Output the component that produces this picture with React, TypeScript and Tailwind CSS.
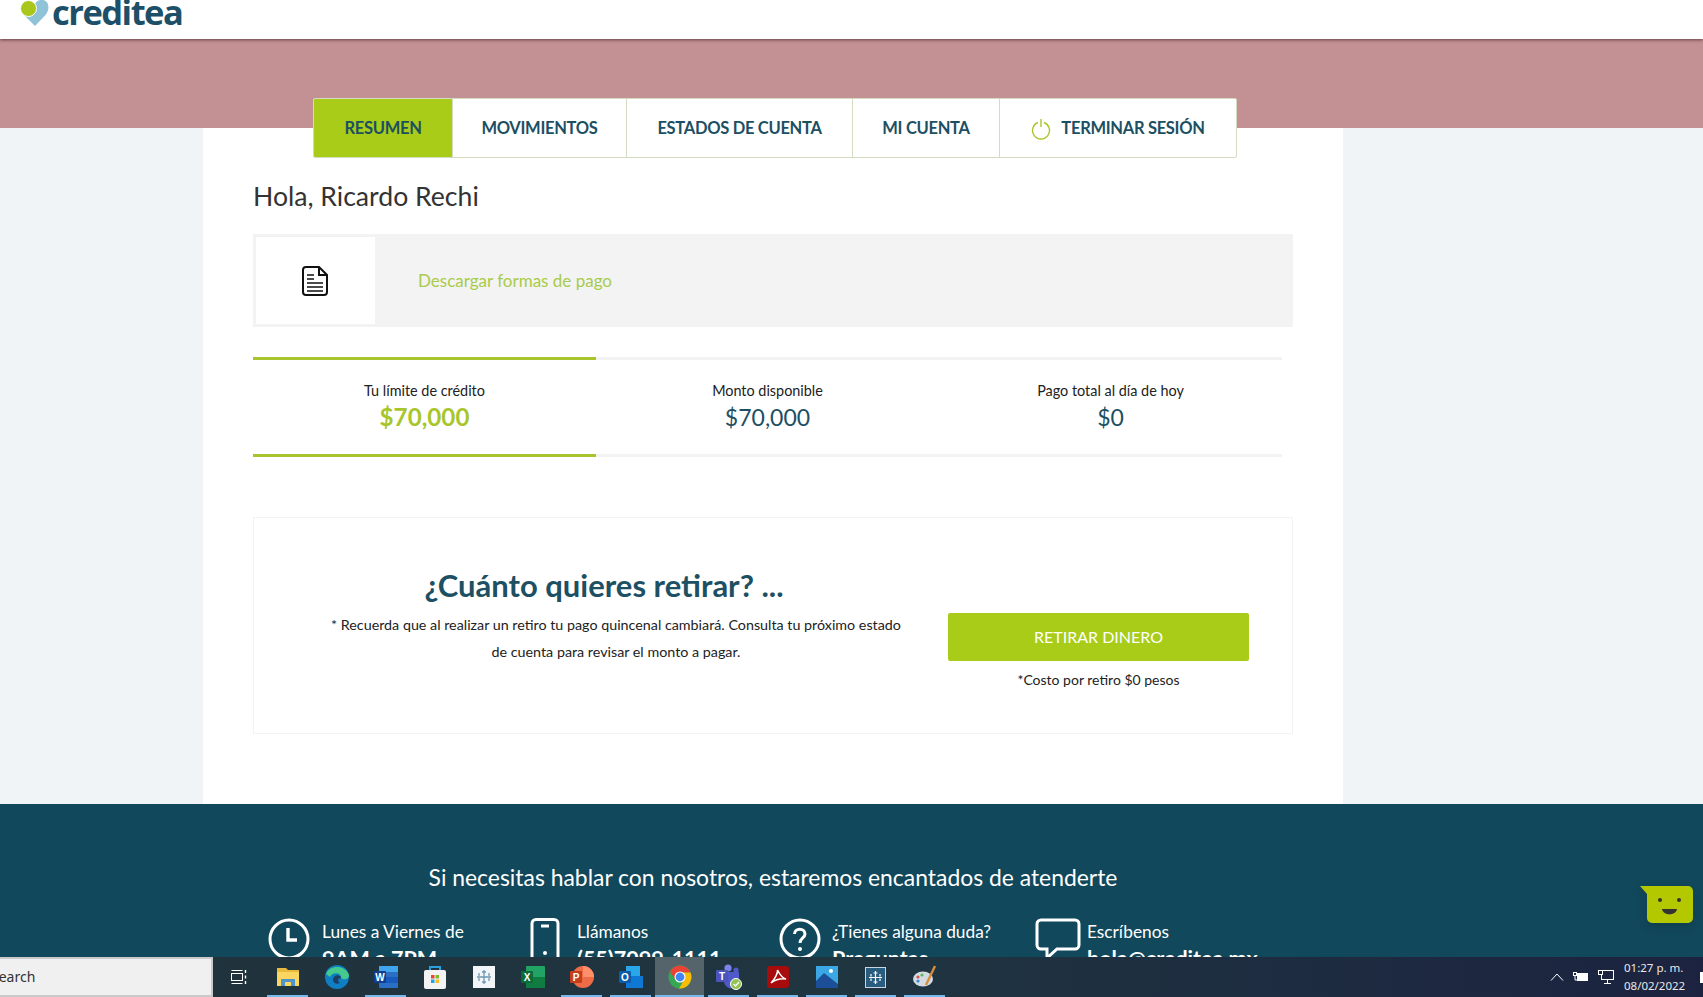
import React from "react";

const font = { fontFamily: '"Lato", "Noto Sans", sans-serif' };

const tabs = [
  { label: "RESUMEN", width: "w-[139px]", active: true },
  { label: "MOVIMIENTOS", width: "w-[174px]" },
  { label: "ESTADOS DE CUENTA", width: "w-[226px]" },
  { label: "MI CUENTA", width: "w-[147px]" },
];

const stats = [
  { label: "Tu límite de crédito", value: "$70,000", active: true },
  { label: "Monto disponible", value: "$70,000" },
  { label: "Pago total al día de hoy", value: "$0" },
];

function Logo() {
  return (
    <div className="flex h-full items-start pl-[20px]">
      <svg width="30" height="27" viewBox="0 0 30 27" className="shrink-0">
        <path d="M2 13 L15 26 L25.5 15 C30 10 29.5 1 23 0 C19 -0.5 16.5 1 15 4 Z" fill="#8fc4d8" />
        <circle cx="8.5" cy="8.5" r="8" fill="#a8c61c" stroke="#ffffff" strokeWidth="1" />
      </svg>
      <span
        className="ml-[2px] mt-[-11px] text-[34.5px] leading-[46px] font-bold tracking-[-1.5px] text-[#1d5068]"
        style={{ fontFamily: '"Open Sans", sans-serif' }}
      >
        creditea
      </span>
    </div>
  );
}

function PowerIcon() {
  return (
    <svg width="20" height="22" viewBox="0 0 20 22" fill="none" stroke="#a8c62b" strokeWidth="1.4" className="mr-[10px] mt-[2px]">
      <path d="M7 4.5 A8.5 8.5 0 1 0 13 4.5" />
      <path d="M10 1 V9" />
    </svg>
  );
}

function DocIcon() {
  return (
    <svg width="26" height="30" viewBox="0 0 26 30" fill="none" stroke="#111111" strokeWidth="2" className="mr-[2px]">
      <path d="M4 1 H17 L25 9 V26 A3 3 0 0 1 22 29 H4 A3 3 0 0 1 1 26 V4 A3 3 0 0 1 4 1 Z" />
      <path d="M17 1 V9 H25" />
      <path d="M5 9 H12 M5 13 H12 M5 17 H21 M5 21 H21 M5 25 H21" strokeWidth="1.6" />
    </svg>
  );
}

function ContactIcon({ kind }: { kind: string }) {
  if (kind === "clock") {
    return (
      <svg width="42" height="42" viewBox="0 0 42 42" fill="none" stroke="#fff" strokeWidth="3">
        <circle cx="21" cy="21" r="19" />
        <path d="M20 10 V22 H29" strokeWidth="3.4" />
      </svg>
    );
  }
  if (kind === "phone") {
    return (
      <svg width="30" height="50" viewBox="0 0 30 50" fill="none" stroke="#fff" strokeWidth="3" className="ml-[7px]">
        <rect x="2" y="1.5" width="26" height="47" rx="4" />
        <path d="M11 8 H19" />
        <circle cx="15" cy="35" r="2" fill="#fff" stroke="none" />
      </svg>
    );
  }
  if (kind === "help") {
    return (
      <svg width="42" height="42" viewBox="0 0 42 42" fill="none" stroke="#fff" strokeWidth="3" className="ml-[1px]">
        <circle cx="21" cy="21" r="19" />
        <path d="M15.5 16 C15.5 9.5 26 9.5 26 16 C26 20 21 20 21 25" />
        <circle cx="21" cy="31" r="2" fill="#fff" stroke="none" />
      </svg>
    );
  }
  return (
    <svg width="46" height="42" viewBox="0 0 46 42" fill="none" stroke="#fff" strokeWidth="3" className="ml-[2px]">
      <path d="M6 2 H40 A4 4 0 0 1 44 6 V27 A4 4 0 0 1 40 31 H22 L12 40 V31 H6 A4 4 0 0 1 2 27 V6 A4 4 0 0 1 6 2 Z" />
    </svg>
  );
}

const contacts = [
  { icon: "clock", line1: "Lunes a Viernes de", line2: "9AM a 7PM" },
  { icon: "phone", line1: "Llámanos", line2: "(55)7099-1111" },
  { icon: "help", line1: "¿Tienes alguna duda?", line2: "Preguntas" },
  { icon: "mail", line1: "Escríbenos", line2: "hola@creditea.mx" },
];

// taskbar glyphs, drawn on a 24 box
function TaskGlyph({ name }: { name: string }) {
  switch (name) {
    case "view":
      return (
        <svg width="16" height="18" viewBox="0 0 16 18" fill="none" stroke="#fff" strokeWidth="1">
          <path d="M0.5 2.5 H11.5 M0.5 15.5 H11.5" />
          <rect x="0.5" y="5.5" width="11" height="7" />
          <path d="M14.5 2 V5 M14.5 7.5 V10.5 M14.5 13 V16" strokeWidth="1.4" />
        </svg>
      );
    case "folder":
      return (
        <svg width="22" height="20" viewBox="0 0 22 20">
          <path d="M0 1 H9 L11 3 H22 V19 H0 Z" fill="#e8b93a" />
          <path d="M0 5 H22 V19 H0 Z" fill="#fad55f" />
          <path d="M4 19 V12 H18 V19 H14 V15 H8 V19 Z" fill="#4f94c8" />
        </svg>
      );
    case "edge":
      return (
        <svg width="24" height="24" viewBox="0 0 24 24">
          <circle cx="12" cy="12" r="12" fill="#0f7fc4" />
          <path d="M1 9 C4 0 20 -1 24 10 C24 15 18 15 16 13 C17 8 8 6 5 12 Z" fill="#45c98c" />
          <path d="M8 15 C8 9 16 9 16 13 C13 13 12 16 15 18 C12 20 8 18 8 15 Z" fill="#1c3f66" />
        </svg>
      );
    case "word":
      return (
        <svg width="24" height="22" viewBox="0 0 24 22">
          <rect x="5" y="0" width="19" height="22" rx="1" fill="#2b6fc5" />
          <rect x="5" y="0" width="19" height="6" fill="#41a5ee" />
          <rect x="5" y="11" width="19" height="6" fill="#185abd" />
          <rect x="0" y="5" width="12" height="12" rx="1" fill="#103f91" />
          <text x="6" y="14.5" textAnchor="middle" fontSize="10" fontWeight="700" fill="#fff" fontFamily="Liberation Sans">W</text>
        </svg>
      );
    case "store":
      return (
        <svg width="22" height="24" viewBox="0 0 22 24">
          <path d="M6 5 V2 H16 V5" fill="none" stroke="#2aa0e0" strokeWidth="2" />
          <rect x="0" y="5" width="22" height="19" rx="2" fill="#f3f3f3" />
          <rect x="7" y="10" width="3.5" height="3.5" fill="#e8492f" />
          <rect x="11.5" y="10" width="3.5" height="3.5" fill="#7fba2a" />
          <rect x="7" y="14.5" width="3.5" height="3.5" fill="#1ea2e6" />
          <rect x="11.5" y="14.5" width="3.5" height="3.5" fill="#fbb922" />
        </svg>
      );
    case "tableau":
      return (
        <svg width="22" height="22" viewBox="0 0 22 22">
          <rect width="22" height="22" fill="#f2f5f7" />
          <path d="M11 4 V18 M4 11 H18 M6 7 V10 M6 12 V15 M16 7 V10 M16 12 V15 M9 6 H13 M9 16 H13" stroke="#6f97b3" strokeWidth="1.3" />
        </svg>
      );
    case "excel":
      return (
        <svg width="24" height="22" viewBox="0 0 24 22">
          <rect x="5" y="0" width="19" height="22" rx="1" fill="#21a366" />
          <rect x="5" y="11" width="19" height="11" fill="#107c41" />
          <rect x="0" y="5" width="12" height="12" rx="1" fill="#0c6b38" />
          <text x="6" y="14.5" textAnchor="middle" fontSize="10" fontWeight="700" fill="#fff" fontFamily="Liberation Sans">X</text>
        </svg>
      );
    case "ppt":
      return (
        <svg width="24" height="24" viewBox="0 0 24 24">
          <circle cx="13" cy="12" r="11" fill="#ed6c47" />
          <path d="M13 1 A11 11 0 0 1 24 12 H13 Z" fill="#ff8f6b" />
          <rect x="0" y="6" width="12" height="12" rx="1" fill="#c43e1c" />
          <text x="6" y="15.5" textAnchor="middle" fontSize="10" fontWeight="700" fill="#fff" fontFamily="Liberation Sans">P</text>
        </svg>
      );
    case "outlook":
      return (
        <svg width="24" height="22" viewBox="0 0 24 22">
          <rect x="7" y="0" width="14" height="12" fill="#28a8ea" />
          <path d="M7 10 H24 V22 H7 Z" fill="#0f78d4" />
          <rect x="0" y="5" width="12" height="12" rx="1" fill="#0a5ca8" />
          <text x="6" y="14.5" textAnchor="middle" fontSize="10" fontWeight="700" fill="#fff" fontFamily="Liberation Sans">O</text>
        </svg>
      );
    case "chrome":
      return (
        <svg width="24" height="24" viewBox="0 0 24 24">
          <circle cx="12" cy="12" r="11.5" fill="#34a853" />
          <path d="M2 6.5 A11.5 11.5 0 0 1 22.5 7.5 H12 L7 14 Z" fill="#ea4335" />
          <path d="M22.5 7.5 A11.5 11.5 0 0 1 11 23.5 L16 15 L12 7.5 Z" fill="#fbbc05" />
          <circle cx="12" cy="12" r="5.5" fill="#fff" />
          <circle cx="12" cy="12" r="4.4" fill="#4285f4" />
        </svg>
      );
    case "teams":
      return (
        <svg width="26" height="26" viewBox="0 0 26 26">
          <circle cx="12" cy="4" r="3.6" fill="#7b83eb" />
          <circle cx="20" cy="6" r="2.6" fill="#5059c9" />
          <path d="M8 8 H23 V17 A6 6 0 0 1 8 17 Z" fill="#5059c9" />
          <rect x="0" y="6" width="12" height="12" rx="1" fill="#4b53bc" />
          <text x="6" y="15.5" textAnchor="middle" fontSize="10" fontWeight="700" fill="#fff" fontFamily="Liberation Sans">T</text>
          <circle cx="20" cy="20" r="5.5" fill="#92c353" stroke="#fff" strokeWidth="1" />
          <path d="M17.5 20 L19.5 22 L23 18" fill="none" stroke="#fff" strokeWidth="1.3" />
        </svg>
      );
    case "acrobat":
      return (
        <svg width="22" height="22" viewBox="0 0 22 22">
          <rect width="22" height="22" rx="3" fill="#a80b0b" />
          <path d="M4 17 C8 13 11 7 10.5 4 C13 9 15 12 19 13 C14 12.5 8 14 4 17 Z" fill="none" stroke="#fff" strokeWidth="1.5" />
        </svg>
      );
    case "photos":
      return (
        <svg width="22" height="22" viewBox="0 0 22 22">
          <rect width="22" height="22" fill="#3ba7e5" />
          <circle cx="15" cy="5" r="2" fill="#fff" />
          <path d="M0 15 L8 7 L22 18 V22 H0 Z" fill="#1d4f99" />
        </svg>
      );
    case "tableau2":
      return (
        <svg width="21" height="21" viewBox="0 0 21 21">
          <rect x="0.5" y="0.5" width="20" height="20" fill="#285d80" stroke="#c9d6df" />
          <path d="M10.5 4 V17 M4 10.5 H17 M6 7 V9.5 M6 11.5 V14 M15 7 V9.5 M15 11.5 V14 M8.5 6 H12.5 M8.5 15 H12.5" stroke="#fff" strokeWidth="1.2" />
        </svg>
      );
    case "paint":
      return (
        <svg width="24" height="24" viewBox="0 0 24 24">
          <ellipse cx="10" cy="14" rx="10" ry="7.5" fill="#d3dbe2" />
          <circle cx="5" cy="12" r="1.6" fill="#d9534f" />
          <circle cx="9" cy="10" r="1.6" fill="#5bb75b" />
          <circle cx="5" cy="16" r="1.6" fill="#3a87d6" />
          <path d="M22 1 L13 20" stroke="#d98b3a" strokeWidth="2.4" />
        </svg>
      );
  }
  return null;
}

const taskItems = [
  { name: "view" },
  { name: "folder", open: true },
  { name: "edge" },
  { name: "word", open: true },
  { name: "store" },
  { name: "tableau" },
  { name: "excel" },
  { name: "ppt", open: true },
  { name: "outlook", open: true },
  { name: "chrome", open: true, active: true },
  { name: "teams", open: true },
  { name: "acrobat", open: true },
  { name: "photos", open: true },
  { name: "tableau2", open: true },
  { name: "paint", open: true },
];

function Taskbar() {
  return (
    <div className="flex h-[40px] shrink-0 bg-gradient-to-r from-[#20323c] via-[#1f3540] to-[#1c2340]" style={{ fontFamily: '"Noto Sans", sans-serif' }}>
      <div className="h-full w-[213px] shrink-0 overflow-hidden border-y-2 border-r-2 border-[#c9c9c9] bg-[#f0f0f0]">
        <div className="ml-[-9px] text-[14px] leading-[35px] text-[#333]">Search</div>
      </div>
      <div className="ml-[1px] flex">
        {taskItems.map((item) => (
          <div
            key={item.name}
            className={`relative flex h-full w-[49px] items-center justify-center ${item.active ? "bg-[#55646b]" : ""}`}
          >
            <TaskGlyph name={item.name} />
            {item.open && (
              <div className={`absolute bottom-0 h-[2px] bg-[#76b9ed] ${item.active ? "inset-x-0" : "inset-x-[4px]"}`} />
            )}
          </div>
        ))}
      </div>
      <div className="ml-auto flex items-center text-white">
        <svg width="14" height="8" viewBox="0 0 14 8" fill="none" stroke="#fff" strokeWidth="1">
          <path d="M1 7.5 L7 1 L13 7.5" />
        </svg>
        <svg width="16" height="12" viewBox="0 0 16 12" fill="none" stroke="#fff" className="ml-[9px]">
          <rect x="4.5" y="2.5" width="10" height="7" fill="#fff" />
          <rect x="0.5" y="1.5" width="3" height="3" />
          <path d="M2 5 V9 H4" />
        </svg>
        <svg width="16" height="14" viewBox="0 0 16 14" fill="none" stroke="#fff" className="ml-[9px]">
          <rect x="3.5" y="0.5" width="12" height="9" />
          <rect x="0.5" y="0.5" width="4" height="4" fill="#1c2340" />
          <path d="M9.5 9.5 V13 M6 13.5 H13" />
        </svg>
        <div className="ml-[10px] w-[76px] text-[11.5px] leading-[18px] text-[#e8e8e8]">
          <div>01:27 p. m.</div>
          <div>08/02/2022</div>
        </div>
        <div className="h-[11px] w-[3px] bg-white" />
      </div>
    </div>
  );
}

function ChatBubble() {
  return (
    <div className="absolute left-[1640px] top-[886px] drop-shadow-lg">
      <svg width="54" height="38" viewBox="0 0 54 38">
        <path d="M0 0 H48 A5 5 0 0 1 53 5 V32 A5 5 0 0 1 48 37 H12 A5 5 0 0 1 7 32 V8 Z" fill="#b4c800" />
        <circle cx="20" cy="14" r="2" fill="#333" />
        <circle cx="39" cy="14" r="2" fill="#333" />
        <path d="M22 23 H37 C36 30 23 30 22 23 Z" fill="#333" />
      </svg>
    </div>
  );
}

export default function App() {
  return (
    <div className="relative flex h-[997px] flex-col overflow-hidden bg-[#f0f4f7]" style={font}>
      <div className="flex min-h-0 flex-1 flex-col overflow-hidden">
        <header className="relative z-10 h-[39px] shrink-0 overflow-hidden bg-white shadow-[0_1px_3px_rgba(60,30,30,0.7)]">
          <Logo />
        </header>
        <div className="h-[89px] shrink-0 bg-[#c39093]" />

        <main className="ml-[203px] h-[676px] w-[1140px] shrink-0 bg-white pl-[50px]">
          <nav className="relative ml-[60px] mt-[-30px] flex h-[60px] w-[924px] overflow-hidden rounded-[2px] border border-[#d3dcc0] bg-white text-[16.5px] font-bold tracking-[-0.3px] text-[#1d4f63]">
            {tabs.map((t) => (
              <div
                key={t.label}
                className={`flex items-center justify-center border-r border-[#d3dcc0] ${t.width} ${t.active ? "bg-[#a8cc18]" : ""}`}
              >
                {t.label}
              </div>
            ))}
            <div className="flex flex-1 items-center justify-center">
              <PowerIcon />
              TERMINAR SESIÓN
            </div>
          </nav>

          <h1 className="mt-[22px] text-[26.6px] leading-[32px] text-[#333]">Hola, Ricardo Rechi</h1>

          <div className="mt-[22px] flex h-[93px] w-[1040px] items-center bg-[#f3f3f3] pl-[3px]">
            <div className="flex h-[87px] w-[119px] items-center justify-center bg-white">
              <DocIcon />
            </div>
            <span className="ml-[43px] text-[17px] text-[#a9cb4a]">Descargar formas de pago</span>
          </div>

          <div className="mt-[30px] grid w-[1029px] grid-cols-3 border-y-[3px] border-[#f3f3f3]">
            {stats.map((s) => (
              <div key={s.label} className="relative flex h-[94px] flex-col items-center pt-[21px]">
                {s.active && <div className="absolute inset-x-0 top-[-3px] h-[3px] bg-[#a8c62b]" />}
                {s.active && <div className="absolute inset-x-0 bottom-[-3px] h-[3px] bg-[#a8c62b]" />}
                <div className="text-[14.4px] leading-[20px] text-[#222]">{s.label}</div>
                <div className={`mt-[-1px] leading-[34px] ${s.active ? "text-[24.2px] font-bold text-[#a8c62b]" : "text-[23px] text-[#1d4f63]"}`}>{s.value}</div>
              </div>
            ))}
          </div>

          <div className="mt-[60px] flex h-[217px] w-[1040px] border border-[#f3f3f3]">
            <div className="flex w-[700px] flex-col items-center pt-[44px]">
              <h2 className="text-[31px] font-bold leading-[46px] text-[#1d5063]">¿Cuánto quieres retirar? ...</h2>
              <p className="ml-[24px] mt-[3px] w-[575px] text-center text-[14.3px] leading-[27px] text-[#222]">
                * Recuerda que al realizar un retiro tu pago quincenal cambiará. Consulta tu próximo estado de cuenta para revisar el monto a pagar.
              </p>
            </div>
            <div className="ml-[-6px] flex w-[301px] flex-col items-center pt-[95px]">
              <button className="h-[48px] w-full rounded-[2px] bg-[#a8cc18] text-[16px] text-white">RETIRAR DINERO</button>
              <div className="mt-[9px] text-[14px] leading-[20px] text-[#222]">*Costo por retiro $0 pesos</div>
            </div>
          </div>
        </main>

        <footer className="flex-1 bg-[#11485c] pl-[268px] text-white">
          <div className="mt-[58px] w-[1010px] text-center text-[22.9px] leading-[30px]">
            Si necesitas hablar con nosotros, estaremos encantados de atenderte
          </div>
          <div className="mt-[26px] flex">
            {contacts.map((c) => (
              <div key={c.icon} className="flex w-[255px]">
                <div className="w-[54px] shrink-0">
                  <ContactIcon kind={c.icon} />
                </div>
                <div className="mt-[1px]">
                  <div className="text-[17.3px] leading-[26px]">{c.line1}</div>
                  <div className="text-[21.5px] font-bold leading-[26px]">{c.line2}</div>
                </div>
              </div>
            ))}
          </div>
        </footer>
      </div>
      <Taskbar />
      <ChatBubble />
    </div>
  );
}
